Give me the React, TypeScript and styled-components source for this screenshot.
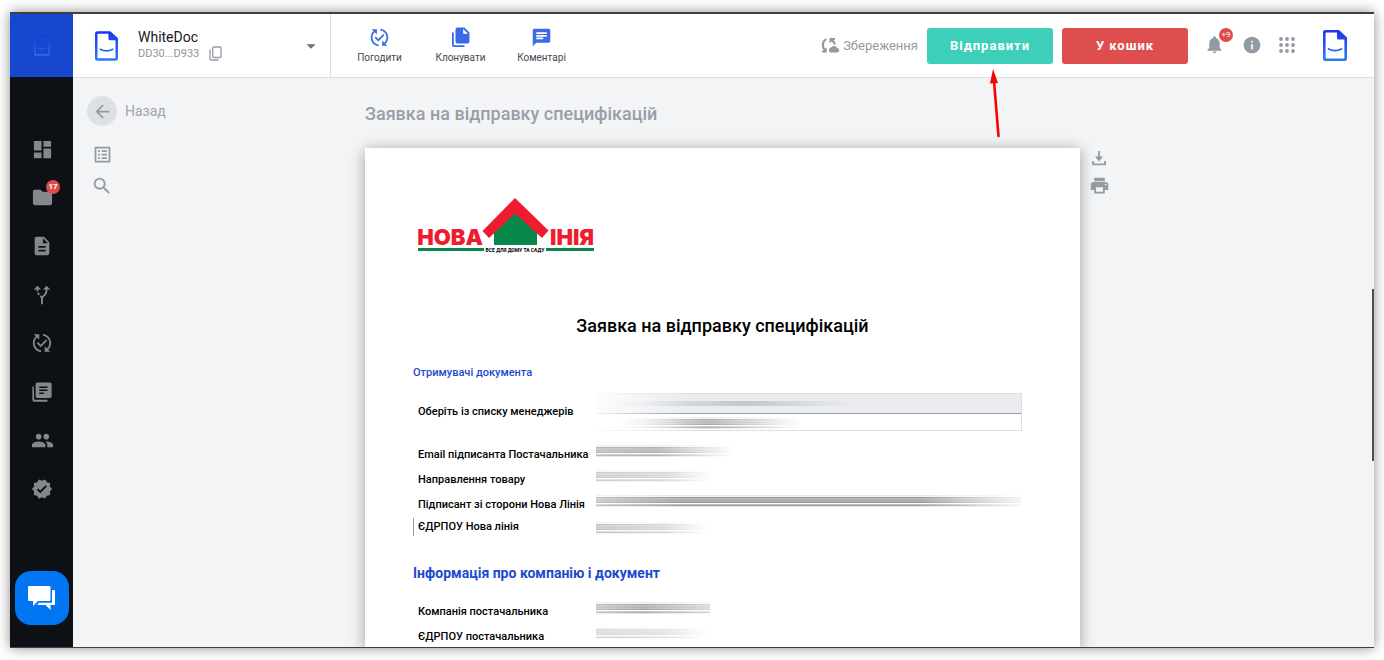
import React from "react";
import styled, { createGlobalStyle, css } from "styled-components";
import {
  MdAltRoute,
  MdArrowBack,
  MdArrowDropDown,
  MdChat,
  MdDashboard,
  MdDescription,
  MdFolder,
  MdInfo,
  MdListAlt,
  MdNotifications,
  MdPeople,
  MdPrint,
  MdPublishedWithChanges,
  MdSearch,
  MdVerified,
} from "react-icons/md";

const GlobalStyle = createGlobalStyle`
  * { box-sizing: border-box; }
  body {
    margin: 0;
    background: #fff;
    font-family: Roboto, "Liberation Sans", sans-serif;
    color: #000;
  }
  button { font-family: inherit; border: 0; padding: 0; background: none; cursor: pointer; }
  svg { display: block; flex: none; }
`;

const Page = styled.div`
  height: 100vh;
  padding: 12px 10px;
`;

const Window = styled.div`
  height: 100%;
  display: flex;
  border-top: 2px solid #3f4042;
  border-bottom: 1px solid #3f4042;
  box-shadow: 0 0 12px rgba(0, 0, 0, 0.45);
  overflow: hidden;
`;

const Sidebar = styled.aside`
  flex: none;
  width: 63px;
  display: flex;
  flex-direction: column;
  align-items: center;
  background: #0d1014;
`;

const SidebarLogo = styled.a`
  width: 100%;
  height: 63px;
  display: grid;
  place-items: center;
  background: #1747cd;
`;

const NavList = styled.ul`
  list-style: none;
  margin: 60px 0 0;
  padding: 0 0 0 1px;
  height: 364px;
  display: flex;
  flex-direction: column;
  justify-content: space-between;
`;

const NavLink = styled.a`
  position: relative;
  display: grid;
  place-items: center;
  width: 24px;
  height: 24px;
  color: #85878a;
`;

const Badge = styled.span<{ $light?: boolean }>`
  position: absolute;
  top: -6px;
  right: ${(p) => (p.$light ? -8 : -6)}px;
  min-width: 14px;
  height: 14px;
  border-radius: 7px;
  background: #de4c4c;
  color: #fff;
  font-size: 8px;
  line-height: 14px;
  font-weight: ${(p) => (p.$light ? 400 : 700)};
  text-align: center;
`;

const ChatButton = styled.button`
  margin: auto 0 22px;
  width: 54px;
  height: 54px;
  border-radius: 16px;
  display: grid;
  place-items: center;
  background: #0275f2;
  color: #fff;
`;

const Content = styled.div`
  flex: 1;
  min-width: 0;
  display: flex;
  flex-direction: column;
  background: #f3f4f6;
`;

const Header = styled.header`
  flex: none;
  height: 64px;
  display: flex;
  align-items: center;
  background: #fff;
  border-bottom: 1px solid #dcdee0;
`;

const Workspace = styled.div`
  align-self: stretch;
  width: 258px;
  display: flex;
  align-items: center;
  padding: 0 8px 0 22px;
  border-right: 1px solid #dcdee0;
`;

const WorkspaceText = styled.div`
  flex: 1;
  margin-left: 20px;
  padding-bottom: 2px;
`;

const WorkspaceName = styled.div`
  font-size: 14px;
  line-height: 18px;
  color: #16181c;
`;

const WorkspaceId = styled.div`
  display: flex;
  align-items: center;
  gap: 10px;
  font-size: 11px;
  line-height: 16px;
  color: #8f959c;
`;

const IconButton = styled.button<{ $color?: string }>`
  position: relative;
  display: grid;
  place-items: center;
  color: ${(p) => p.$color ?? "#929aa3"};
`;

const Actions = styled.div`
  display: flex;
  margin-left: 8px;
`;

const ActionButton = styled.button`
  width: 81px;
  display: flex;
  flex-direction: column;
  align-items: center;
  gap: 3px;
  font-size: 10px;
  line-height: 14px;
  color: #44484e;
  svg { color: #3b6ae8; }
`;

const HeaderEnd = styled.div`
  margin-left: auto;
  margin-right: 27px;
  display: flex;
  align-items: center;
`;

const SaveStatus = styled.div`
  display: flex;
  align-items: center;
  gap: 3px;
  margin-right: 9px;
  font-size: 13px;
  line-height: 20px;
  color: #929aa3;
`;

const ButtonSlot = styled.div`
  position: relative;
  margin-right: 9px;
`;

const MainButton = styled.button<{ $tone: "send" | "trash" }>`
  width: 126px;
  height: 36px;
  border-radius: 3px;
  font-size: 13px;
  font-weight: 700;
  letter-spacing: 1px;
  color: #fff;
  background: ${(p) => (p.$tone === "send" ? "#3dcfba" : "#de4e4e")};
`;

const Pointer = styled.svg`
  position: absolute;
  left: 60px;
  top: 41px;
  pointer-events: none;
`;

const HeaderIcons = styled.div`
  display: flex;
  align-items: center;
  gap: 17px;
  margin: 0 28px 0 16px;
  padding-bottom: 2px;
`;

const Main = styled.main`
  position: relative;
  flex: 1;
  min-height: 0;
  overflow: hidden;
  display: grid;
  grid-template-columns: 1fr 715px 1fr;
  padding-right: 2px;
`;

const LeftTools = styled.nav`
  display: flex;
  flex-direction: column;
  align-items: flex-start;
  padding: 18px 0 0 14px;
`;

const BackButton = styled.button`
  display: flex;
  align-items: center;
  gap: 8px;
  font-size: 14px;
  color: #a0a6ad;
`;

const BackCircle = styled.span`
  width: 30px;
  height: 30px;
  border-radius: 50%;
  display: grid;
  place-items: center;
  background: #dee1e4;
  color: #929aa3;
`;

const ToolStack = styled.div`
  display: flex;
  flex-direction: column;
  gap: 10px;
  padding: 18px 0 0 4px;
`;

const RightTools = styled.div`
  display: flex;
  flex-direction: column;
  align-items: flex-start;
  gap: 7px;
  padding: 71px 0 0 9px;
`;

const DocColumn = styled.div`
  display: flex;
  flex-direction: column;
  min-height: 0;
`;

const DocName = styled.h1`
  margin: 24px 0 22px;
  font-size: 18px;
  line-height: 24px;
  font-weight: 500;
  color: #989fa7;
`;

const Paper = styled.article`
  flex: 1;
  padding: 48px 58px 0 48px;
  background: #fff;
  box-shadow: 0 2px 14px rgba(0, 0, 0, 0.35);
`;

const CompanyLogo = styled.svg`
  margin-left: 5px;
`;

const PaperTitle = styled.h2`
  margin: 61px -10px 0 0;
  font-size: 18px;
  line-height: 24px;
  font-weight: 500;
  text-align: center;
`;

const SectionTitle = styled.h3<{ $large?: boolean }>`
  margin: ${(p) => (p.$large ? "29px 0 18px" : "27px 0 12px")};
  font-size: ${(p) => (p.$large ? 14 : 11)}px;
  line-height: 16px;
  font-weight: ${(p) => (p.$large ? 700 : 500)};
  color: #1d49cd;
`;

const Fields = styled.dl`
  margin: 0;
`;

const Field = styled.div<{ $kind?: "tall" | "active" }>`
  display: grid;
  grid-template-columns: 178px 1fr;
  align-items: center;
  padding-left: 4px;
  height: 25px;
  border-left: 1px solid transparent;
  ${(p) => p.$kind === "tall" && css`height: 38px; margin-bottom: 11px;`}
  ${(p) => p.$kind === "active" && css`height: 18px; margin-top: 1px; border-color: #929aa3;`}
`;

const FieldName = styled.dt`
  font-size: 11px;
  line-height: 16px;
  font-weight: 500;
  white-space: nowrap;
`;

const FieldValue = styled.dd<{ $place?: "raised" | "lowered" }>`
  margin: 0;
  ${(p) => p.$place === "raised" && css`padding-bottom: 8px;`}
  ${(p) => p.$place === "lowered" && css`padding-top: 2px;`}
`;

/* A value hidden by a horizontal smear; the mask sets where the ink is dense. */
const Smear = styled.div<{ $width: number; $mask: string }>`
  width: ${(p) => p.$width}px;
  max-width: 100%;
  height: 12px;
  background: linear-gradient(
    #e9e9e9 0 1px, #f2f2f2 1px 2px, #9c9c9c 2px 3px, #b4b4b2 3px 5px, #a6a6a4 5px 6px,
    #b5b5b3 6px 7px, #949494 7px 8px, #fff 8px 9px, #b9bdc6 9px 10px, #9ba2b2 10px 11px, #dfe2e8 11px 12px
  );
  mask-image: linear-gradient(90deg, ${(p) => p.$mask});
`;

const Picker = styled.div`
  height: 38px;
  border: 1px solid #dbdfe2;
  border-left: 0;
  mask-image: linear-gradient(90deg, rgba(0, 0, 0, 0.15), #000 90px);
`;

const PickerHead = styled.div`
  height: 20px;
  padding-top: 7px;
  background: #eaecf0;
  border-bottom: 1px solid #969ba3;
`;

const PickerSmear = styled.div`
  width: 260px;
  height: 5px;
  background: linear-gradient(90deg, transparent 10px, #c3c8cc 150px, transparent);
`;

const PickerBody = styled.div`
  padding-top: 3px;
`;

const ScrollThumb = styled.div`
  position: absolute;
  right: 0;
  top: 211px;
  width: 2px;
  height: 172px;
  background: #4d5156;
`;

function DocMark({ width, height, id, dim }: { width: number; height: number; id: string; dim?: boolean }) {
  return (
    <svg width={width} height={height} viewBox="0 0 24 31" opacity={dim ? 0.75 : 1} aria-hidden="true">
      <defs>
        <linearGradient id={id} x1="0" y1="0" x2="0" y2="1">
          <stop offset="0" stopColor="#1b35e6" />
          <stop offset="1" stopColor="#2d7cf8" />
        </linearGradient>
      </defs>
      <path
        fill={`url(#${id})`}
        fillRule="evenodd"
        d="M2.500 0H16L24 7.500V28.500a2.500 2.500 0 0 1-2.500 2.500H2.500a2.500 2.500 0 0 1-2.500-2.500V2.500a2.500 2.500 0 0 1 2.500-2.500ZM3.600 2.600a1 1 0 0 0-1 1V27.400a1 1 0 0 0 1 1H20.400a1 1 0 0 0 1-1V9.500H15.500a1.500 1.500 0 0 1-1.500-1.500V2.600Z"
      />
      <path d="M5.500 19Q12 22.400 18.500 19" fill="none" stroke="#2560f2" strokeWidth="1.800" strokeLinecap="round" />
    </svg>
  );
}

function LibraryIcon() {
  return (
    <svg width="22" height="22" viewBox="0 0 24 24" fill="currentColor" aria-hidden="true">
      <path d="M3 6H1.500v14.500A2 2 0 0 0 3.500 22.500H18v-2H3.500Z" />
      <path fillRule="evenodd" d="M7 1.500h13.500a2 2 0 0 1 2 2V16.500a2 2 0 0 1-2 2H7a2 2 0 0 1-2-2V3.500a2 2 0 0 1 2-2ZM9 6v1.600h9V6Zm0 3.300v1.600h9V9.300Zm0 3.300v1.600h5v-1.600Z" />
    </svg>
  );
}

function CopyIcon() {
  return (
    <svg width="13" height="15" viewBox="0 0 13 15" fill="none" stroke="currentColor" strokeWidth="1.300" aria-hidden="true">
      <rect x="3.700" y="1" width="8.300" height="10.500" rx="1" />
      <path d="M1 3.500V13a1 1 0 0 0 1 1H9.500" />
    </svg>
  );
}

function CloneIcon() {
  return (
    <svg width="18" height="21" viewBox="0 0 18 21" fill="currentColor" aria-hidden="true">
      <path fillRule="evenodd" d="M5.500.500H12.500L17.500 5.500V14.500a2 2 0 0 1-2 2H5.500a2 2 0 0 1-2-2V2.500a2 2 0 0 1 2-2ZM11.200 2V6.800H16Z" />
      <path d="M0 5.500H1.800V18.200H12.500V20H1.800a1.800 1.800 0 0 1-1.800-1.800Z" />
    </svg>
  );
}

function ChatBubbles() {
  return (
    <svg width="27" height="25" viewBox="0 0 27 25" fill="currentColor" aria-hidden="true">
      <path d="M1 0H21.500a1 1 0 0 1 1 1V14a1 1 0 0 1-1 1H10L5 20V15H1a1 1 0 0 1-1-1V1a1 1 0 0 1 1-1Z" />
      <path d="M24 4H26a1 1 0 0 1 1 1V18a1 1 0 0 1-1 1H22.500V24L17.500 19H9L11.200 16.700H23a1 1 0 0 0 1-1Z" />
    </svg>
  );
}

function SyncIcon() {
  return (
    <svg width="19" height="17" viewBox="0 0 19 17" fill="currentColor" aria-hidden="true">
      <path d="M5.500 1V3.200C2.700 4.700 2.300 9.300 4.300 11.800L5.800 10.500V15.500H1V13.500H2.800C-.6 9.500.2 3 5.500 1Z" />
      <path d="M8.500 1H14V3H12.500C13.800 4.400 14.600 5.800 14.900 7.500H12.700C12.300 6.200 11.500 5.200 10.500 4.400L8.500 6.300Z" />
      <path d="M9.500 15.500A2.500 2.500 0 0 1 9.500 10.800 4 4 0 0 1 16.300 11 2.300 2.300 0 0 1 16.500 15.500Z" />
    </svg>
  );
}

function DotsIcon() {
  const steps = [2, 8, 14];
  return (
    <svg width="16" height="16" viewBox="0 0 16 16" fill="currentColor" aria-hidden="true">
      {steps.map((y) => steps.map((x) => <circle key={`${x}-${y}`} cx={x} cy={y} r="1.900" />))}
    </svg>
  );
}

function DownloadIcon() {
  return (
    <svg width="20" height="19" viewBox="0 0 20 19" fill="none" stroke="currentColor" strokeWidth="1.800" aria-hidden="true">
      <path d="M10 2V11M4 12V15.300H16V12" />
      <path d="M6 7.500H14L10 12.500Z" fill="currentColor" stroke="none" />
    </svg>
  );
}

const navItems = [
  { label: "Панель", icon: <MdDashboard size={23} /> },
  { label: "Папки", icon: <MdFolder size={23} />, badge: "17" },
  { label: "Документи", icon: <MdDescription size={22} /> },
  { label: "Маршрути", icon: <MdAltRoute size={22} /> },
  { label: "Погодження", icon: <MdPublishedWithChanges size={22} /> },
  { label: "Бібліотека", icon: <LibraryIcon /> },
  { label: "Контакти", icon: <MdPeople size={23} /> },
  { label: "Перевірка", icon: <MdVerified size={22} /> },
];

const recipients: { name: string; width: number; mask: string; active?: boolean }[] = [
  { name: "Email підписанта Постачальника", width: 138, mask: "rgba(0,0,0,.7), rgba(0,0,0,.8) 45%, transparent" },
  { name: "Направлення товару", width: 116, mask: "rgba(0,0,0,.5), rgba(0,0,0,.4) 60%, transparent" },
  { name: "Підписант зі сторони Нова Лінія", width: 425, mask: "rgba(0,0,0,.6), #000 20%, #000 76%, rgba(0,0,0,.1)" },
  { name: "ЄДРПОУ Нова лінія", width: 112, mask: "rgba(0,0,0,.6), rgba(0,0,0,.4) 60%, transparent", active: true },
];

const company = [
  { name: "Компанія постачальника", width: 114, mask: "rgba(0,0,0,.6), rgba(0,0,0,.9) 40%, rgba(0,0,0,.4)" },
  { name: "ЄДРПОУ постачальника", width: 112, mask: "rgba(0,0,0,.4), rgba(0,0,0,.3) 60%, transparent" },
];

export default function App() {
  return (
    <Page>
      <GlobalStyle />
      <Window>
        <Sidebar>
          <SidebarLogo href="#" aria-label="WhiteDoc">
            <DocMark width={16} height={21} id="mark-side" dim />
          </SidebarLogo>
          <NavList>
            {navItems.map((item) => (
              <li key={item.label}>
                <NavLink href="#" aria-label={item.label}>
                  {item.icon}
                  {item.badge && <Badge>{item.badge}</Badge>}
                </NavLink>
              </li>
            ))}
          </NavList>
          <ChatButton aria-label="Чат">
            <ChatBubbles />
          </ChatButton>
        </Sidebar>

        <Content>
          <Header>
            <Workspace>
              <DocMark width={23} height={30} id="mark-workspace" />
              <WorkspaceText>
                <WorkspaceName>WhiteDoc</WorkspaceName>
                <WorkspaceId>
                  DD30...D933
                  <IconButton aria-label="Копіювати">
                    <CopyIcon />
                  </IconButton>
                </WorkspaceId>
              </WorkspaceText>
              <IconButton $color="#6f7276" aria-label="Змінити простір">
                <MdArrowDropDown size={22} />
              </IconButton>
            </Workspace>

            <Actions>
              <ActionButton>
                <MdPublishedWithChanges size={21} />
                Погодити
              </ActionButton>
              <ActionButton>
                <CloneIcon />
                Клонувати
              </ActionButton>
              <ActionButton>
                <MdChat size={21} />
                Коментарі
              </ActionButton>
            </Actions>

            <HeaderEnd>
              <SaveStatus>
                <SyncIcon />
                Збереження
              </SaveStatus>
              <ButtonSlot>
                <MainButton $tone="send">Відправити</MainButton>
                <Pointer width="14" height="70" viewBox="0 0 14 70" aria-hidden="true">
                  <path d="M7 12 11.500 67" stroke="#fe0000" strokeWidth="2.600" strokeLinecap="round" />
                  <path d="M6 0 11 14 3 14.500Z" fill="#fe0000" />
                </Pointer>
              </ButtonSlot>
              <MainButton $tone="trash">У кошик</MainButton>
              <HeaderIcons>
                <IconButton aria-label="Сповіщення">
                  <MdNotifications size={21} />
                  <Badge $light>+9</Badge>
                </IconButton>
                <IconButton aria-label="Інформація">
                  <MdInfo size={20} />
                </IconButton>
                <IconButton aria-label="Застосунки">
                  <DotsIcon />
                </IconButton>
              </HeaderIcons>
              <DocMark width={24} height={31} id="mark-account" />
            </HeaderEnd>
          </Header>

          <Main>
            <LeftTools>
              <BackButton>
                <BackCircle>
                  <MdArrowBack size={21} />
                </BackCircle>
                Назад
              </BackButton>
              <ToolStack>
                <IconButton aria-label="Зміст">
                  <MdListAlt size={21} />
                </IconButton>
                <IconButton aria-label="Пошук">
                  <MdSearch size={22} />
                </IconButton>
              </ToolStack>
            </LeftTools>

            <DocColumn>
              <DocName>Заявка на відправку специфікацій</DocName>
              <Paper>
                <CompanyLogo width="176" height="57" viewBox="0 0 176 57" role="img" aria-label="Нова Лінія">
                  <path d="M97 15 119 36V49H76V36Z" fill="#07874a" />
                  <path d="M97 2 130.500 34.500 124 42 97 17.500 71 42 64.500 35Z" fill="#ee1c2e" />
                  <g fill="#ee1c2e" fontFamily="Inter, sans-serif" fontWeight="900" fontSize="22">
                    <text x="65" y="49" textAnchor="end">НОВА</text>
                    <text x="176" y="49" textAnchor="end">ІНІЯ</text>
                  </g>
                  <path d="M0 52H66V55H0ZM128 52H176V55H128Z" fill="#07874a" />
                  <text x="97" y="56" textAnchor="middle" fontFamily="Roboto, sans-serif" fontWeight="700" fontSize="5">
                    ВСЕ ДЛЯ ДОМУ ТА САДУ
                  </text>
                </CompanyLogo>
                <PaperTitle>Заявка на відправку специфікацій</PaperTitle>

                <SectionTitle>Отримувачі документа</SectionTitle>
                <Fields>
                  <Field $kind="tall">
                    <FieldName>Оберіть із списку менеджерів</FieldName>
                    <FieldValue>
                      <Picker>
                        <PickerHead>
                          <PickerSmear />
                        </PickerHead>
                        <PickerBody>
                          <Smear $width={205} $mask="transparent 20px, rgba(0,0,0,.85) 55%, transparent" />
                        </PickerBody>
                      </Picker>
                    </FieldValue>
                  </Field>
                  {recipients.map((r) => (
                    <Field key={r.name} $kind={r.active ? "active" : undefined}>
                      <FieldName>{r.name}</FieldName>
                      <FieldValue $place={r.active ? "lowered" : "raised"}>
                        <Smear $width={r.width} $mask={r.mask} />
                      </FieldValue>
                    </Field>
                  ))}
                </Fields>

                <SectionTitle $large>Інформація про компанію і документ</SectionTitle>
                <Fields>
                  {company.map((c) => (
                    <Field key={c.name}>
                      <FieldName>{c.name}</FieldName>
                      <FieldValue $place="raised">
                        <Smear $width={c.width} $mask={c.mask} />
                      </FieldValue>
                    </Field>
                  ))}
                </Fields>
              </Paper>
            </DocColumn>

            <RightTools>
              <IconButton aria-label="Завантажити">
                <DownloadIcon />
              </IconButton>
              <IconButton aria-label="Друкувати">
                <MdPrint size={21} />
              </IconButton>
            </RightTools>
            <ScrollThumb />
          </Main>
        </Content>
      </Window>
    </Page>
  );
}
